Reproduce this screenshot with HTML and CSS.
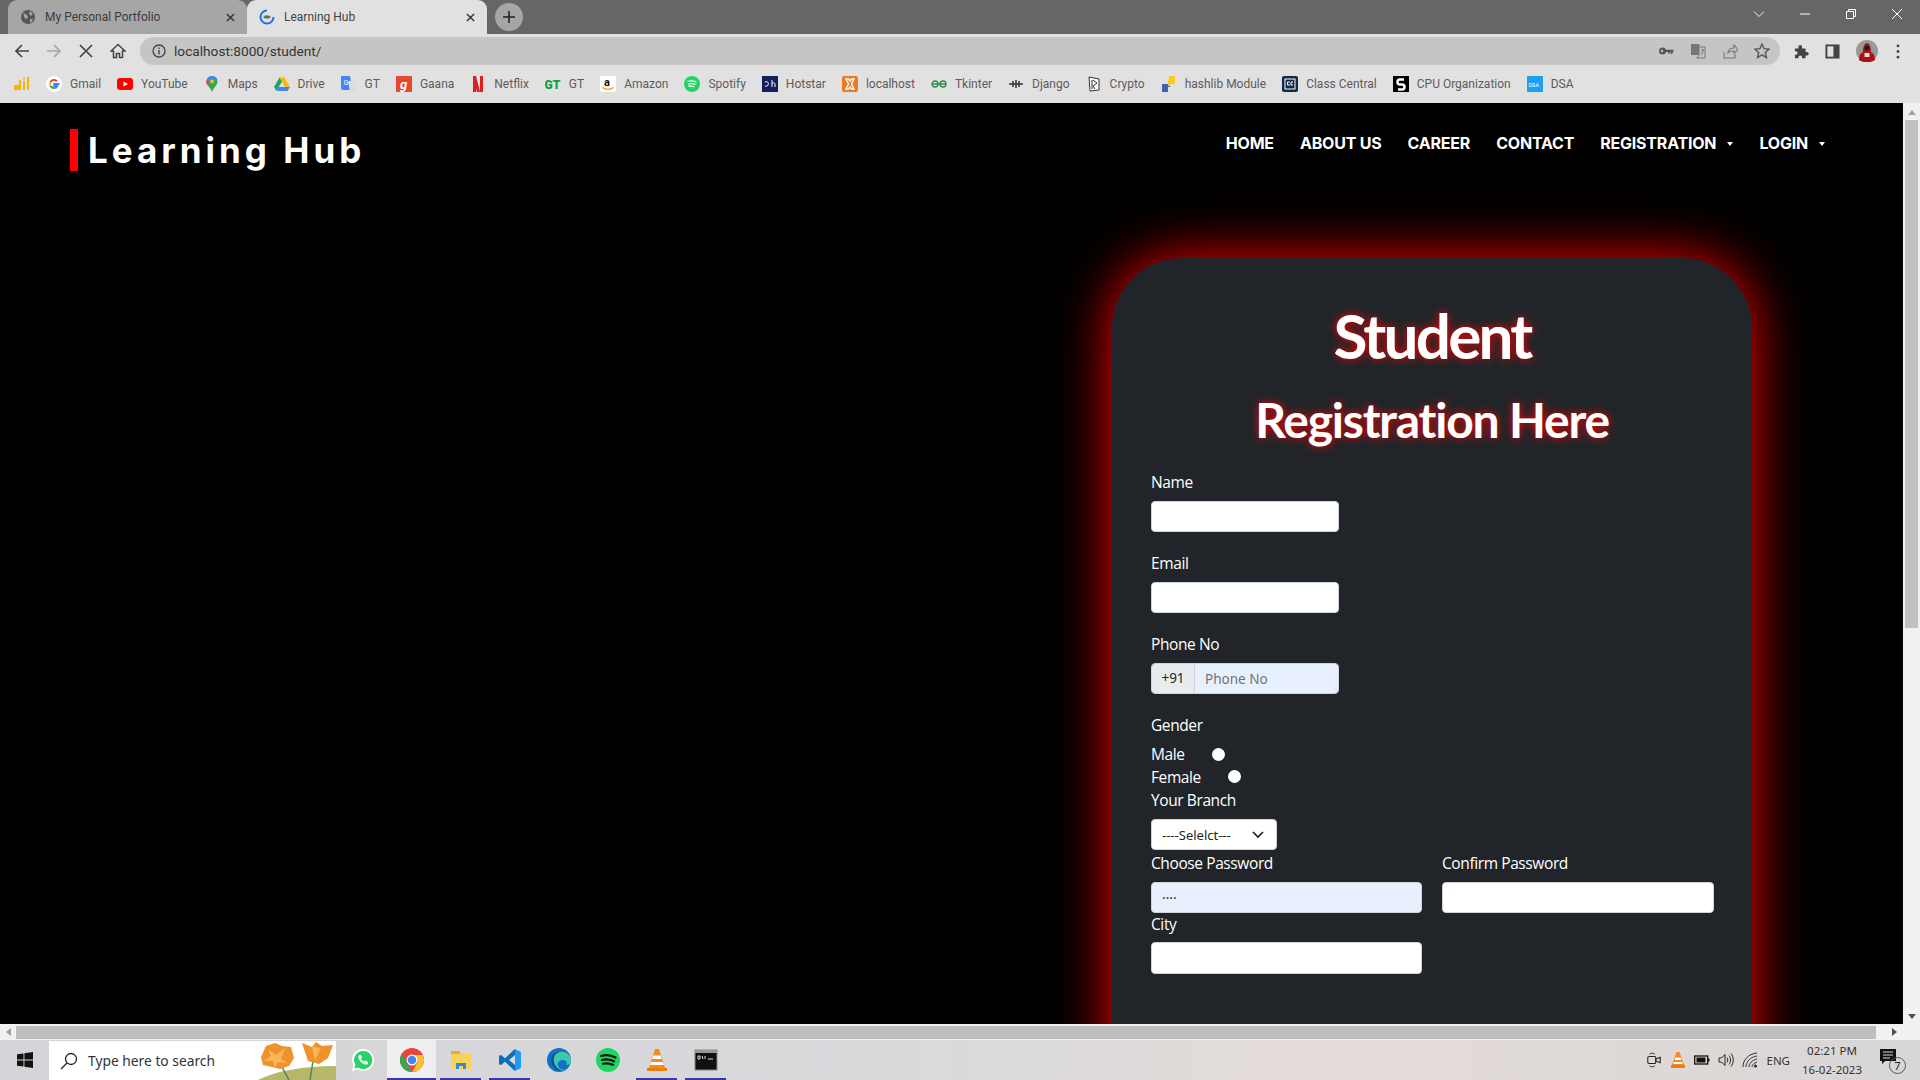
FILE: index.html
```html
<!DOCTYPE html>
<html lang="en">
<head>
    <meta charset="UTF-8">
    <meta name="viewport" content="width=device-width, initial-scale=1.0">
    <title>Learning Hub</title>
    <link rel="stylesheet" href="styles.css">
</head>
<body>
    <!-- browser tabs -->
    <div class="tabstrip">
        <div class="tab tab-off">
            <svg class="fav" viewBox="0 0 16 16"><circle cx="8" cy="8" r="7" fill="#555"/><path d="M3 4l4 2 1 3-3 1zM10 2l3 3-2 2-2-2zM10 10l3 0-2 4-1-1z" fill="#a6a6a6"/></svg>
            <span class="tab-title">My Personal Portfolio</span>
            <svg class="tab-x" viewBox="0 0 10 10"><path d="M1 1l8 8M9 1l-8 8" stroke="#333" stroke-width="1.6"/></svg>
        </div>
        <div class="tab tab-on">
            <svg class="fav" viewBox="0 0 16 16"><path d="M8 1.500a6.500 6.500 0 1 0 6.500 6.500" fill="none" stroke="#1a73e8" stroke-width="2"/><path d="M4.500 8h7M6 6.500v3M8 6v4M10 6.500v3" stroke="#444" stroke-width="1"/></svg>
            <span class="tab-title">Learning Hub</span>
            <svg class="tab-x" viewBox="0 0 10 10"><path d="M1 1l8 8M9 1l-8 8" stroke="#333" stroke-width="1.6"/></svg>
        </div>
        <div class="new-tab"><svg viewBox="0 0 12 12"><path d="M6 0v12M0 6h12" stroke="#222" stroke-width="1.6"/></svg></div>
        <div class="win-btns">
            <svg viewBox="0 0 12 12"><path d="M1 3.500l5 5 5-5" fill="none" stroke="#eee"/></svg>
            <svg viewBox="0 0 12 12"><path d="M1 6h10" stroke="#fff"/></svg>
            <svg viewBox="0 0 12 12"><path d="M1.500 3.500h7v7h-7zM3.500 3.500v-2h7v7h-2" fill="none" stroke="#fff"/></svg>
            <svg viewBox="0 0 12 12"><path d="M1 1l10 10M11 1l-10 10" stroke="#fff"/></svg>
        </div>
    </div>

    <!-- address bar -->
    <div class="toolbar">
        <div class="nav-icons">
            <svg viewBox="0 0 16 16"><path d="M15 8H2M8 2L2 8l6 6" fill="none" stroke="#444" stroke-width="1.7"/></svg>
            <svg viewBox="0 0 16 16"><path d="M1 8h13M8 2l6 6-6 6" fill="none" stroke="#a5a5a5" stroke-width="1.7"/></svg>
            <svg viewBox="0 0 16 16"><path d="M2 2l12 12M14 2L2 14" stroke="#444" stroke-width="1.7"/></svg>
            <svg viewBox="0 0 16 16"><path d="M8 1.500L1 8h2.500v6.500h3v-4h3v4h3V8H15z" fill="none" stroke="#444" stroke-width="1.5"/></svg>
        </div>
        <div class="urlbar">
            <svg class="info" viewBox="0 0 14 14"><circle cx="7" cy="7" r="6" fill="none" stroke="#444" stroke-width="1.3"/><path d="M7 6v4.500M7 3.400v1.500" stroke="#444" stroke-width="1.4"/></svg>
            <span class="url">localhost:8000/student/</span>
            <div class="url-actions">
                <svg viewBox="0 0 16 16"><circle cx="4.500" cy="8" r="3.500" fill="#555"/><circle cx="4" cy="8" r="1.200" fill="#c5c5c5"/><path d="M7 6.700h8.500v2.200h-1v2h-1.700v-2h-1v1.500H10V8.900H7z" fill="#555"/></svg>
                <svg viewBox="0 0 16 16"><rect x="1" y="1" width="8.500" height="11" fill="#777"/><path d="M9.500 4H15v11H6.500l3-3" fill="none" stroke="#777"/><path d="M11 7h3M12.500 6v1M11.500 12l2-5" stroke="#777" fill="none"/></svg>
                <svg viewBox="0 0 16 16"><path d="M2 9v6h11v-4M6 10c0-4 3-5 6-5V2l4 4.500-4 4V8c-3 0-4.500 0-6 2z" fill="none" stroke="#777" stroke-width="1.100"/></svg>
                <svg viewBox="0 0 16 16"><path d="M8 1l2.100 4.700 5 .5-3.800 3.300 1.100 5L8 11.900l-4.400 2.600 1.100-5L.9 6.200l5-.5z" fill="none" stroke="#555" stroke-width="1.400"/></svg>
            </div>
        </div>
        <div class="tool-icons">
            <svg viewBox="0 0 16 16"><path d="M1 5h4V3a2 2 0 0 1 4 0v2h4v4h1.500a2 2 0 0 1 0 4H13v3H9v-1a2 2 0 0 0-4 0v1H1v-4h1a2 2 0 0 0 0-4H1z" fill="#444" transform="scale(.95)"/></svg>
            <svg viewBox="0 0 16 16"><rect x="1.500" y="1.500" width="13" height="13" fill="none" stroke="#444" stroke-width="2"/><rect x="9" y="1.500" width="5.500" height="13" fill="#444"/></svg>
            <svg class="avatar" viewBox="0 0 22 22"><circle cx="11" cy="11" r="11" fill="#999"/><path d="M3 20c0-5 2-7 4-8 0-6 2-9 4-9s4 3 4 9c2 1 4 3 4 8-4 3-12 3-16 0z" fill="#a81414"/><circle cx="11" cy="8" r="2.500" fill="#2a1a1a"/><rect x="8.500" y="13" width="5" height="4" fill="#e8dada"/></svg>
            <svg class="dots" viewBox="0 0 4 16"><circle cx="2" cy="2" r="1.500" fill="#444"/><circle cx="2" cy="8" r="1.500" fill="#444"/><circle cx="2" cy="14" r="1.500" fill="#444"/></svg>
        </div>
    </div>

    <!-- bookmarks -->
    <div class="bookmarks">
        <div class="bm bm-apps"><svg viewBox="0 0 16 16"><path d="M1 9h4V4h2v10H3a2.500 2.500 0 0 1-2-5zM9 5h2v9H9zM9 1.500h2v2H9zM13 1h2v13h-2z" fill="#f5b800"/></svg></div>
        <div class="bm"><svg viewBox="0 0 16 16"><circle cx="8" cy="8" r="8" fill="#fff"/><path d="M13.500 8H8.200v2h3a3.300 3.300 0 0 1-3.200 2" fill="none" stroke="#4285f4" stroke-width="2"/><path d="M8 12a4 4 0 0 1-3.600-2.300" fill="none" stroke="#34a853" stroke-width="2"/><path d="M4.400 9.700a4 4 0 0 1 0-3.400" fill="none" stroke="#fbbc05" stroke-width="2"/><path d="M4.400 6.300A4 4 0 0 1 11 5.300" fill="none" stroke="#ea4335" stroke-width="2"/></svg><span>Gmail</span></div>
        <div class="bm"><svg viewBox="0 0 16 16"><rect y="2" width="16" height="12" rx="3" fill="#f00"/><path d="M6.500 5.500v5L11 8z" fill="#fff"/></svg><span>YouTube</span></div>
        <div class="bm"><svg viewBox="0 0 16 16"><path d="M8 0a5.500 5.500 0 0 1 5.500 5.500C13.500 9 10 11 8 16 6 11 2.500 9 2.500 5.500A5.500 5.500 0 0 1 8 0z" fill="#34a853"/><path d="M3 3.500A5.500 5.500 0 0 1 8 0a5.500 5.500 0 0 1 5 3L3.500 8z" fill="#4285f4"/><path d="M3 3.500l2.500 3-2.500 2.500C2 7 2 5 3 3.500z" fill="#ea4335"/><circle cx="8" cy="5.500" r="2" fill="#fbbc05"/></svg><span>Maps</span></div>
        <div class="bm"><svg viewBox="0 0 16 16"><path d="M5.500 1.500h5L16 11h-5z" fill="#fbbc05"/><path d="M5.500 1.500L0 11l2.500 4 5.500-9.500z" fill="#1fa463"/><path d="M2.500 15h11l2.500-4H5z" fill="#4285f4"/></svg><span>Drive</span></div>
        <div class="bm"><svg viewBox="0 0 16 16"><path d="M0 0h9l2 14H2a2 2 0 0 1-2-2z" fill="#4285f4"/><path d="M7 5h8v11H9z" fill="#ddd"/><text x="2.500" y="9" font-size="7" fill="#fff" font-family="Roboto">G</text></svg><span>GT</span></div>
        <div class="bm"><svg viewBox="0 0 16 16"><rect width="16" height="16" rx="1" fill="#e8472b"/><text x="4" y="13" font-size="13" font-weight="700" font-style="italic" fill="#fff" font-family="Roboto">g</text></svg><span>Gaana</span></div>
        <div class="bm"><svg viewBox="0 0 16 16"><path d="M3 0h3l4 16H7zM3 0h3v16l-3 0zM10 0h3v16h-3z" fill="#d81f26"/></svg><span>Netflix</span></div>
        <div class="bm"><svg viewBox="0 0 16 16"><text x="-.5" y="13" font-size="12" font-weight="900" fill="#13a03c" font-family="Roboto">GT</text></svg><span>GT</span></div>
        <div class="bm"><svg viewBox="0 0 16 16"><rect width="16" height="16" rx="2" fill="#fff"/><text x="4" y="10" font-size="11" font-weight="700" fill="#111" font-family="Roboto">a</text><path d="M2.500 11.500c3 2.500 8 2.500 11 0" fill="none" stroke="#f90" stroke-width="1.300"/></svg><span>Amazon</span></div>
        <div class="bm"><svg viewBox="0 0 16 16"><circle cx="8" cy="8" r="8" fill="#1ed760"/><path d="M3.500 5.500c3-1 6-.8 9 .8M4 8c3-.8 5-.6 7.500.7M4.500 10.400c2-.5 4-.4 6 .6" fill="none" stroke="#fff" stroke-width="1.300"/></svg><span>Spotify</span></div>
        <div class="bm"><svg viewBox="0 0 16 16"><rect width="16" height="16" fill="#13205c"/><path d="M3 6c3-1 4 1 3 3s-2 1-3 1M10 4v7M10 8c1-2 3-1 3 0v3" fill="none" stroke="#fff" stroke-width="1"/></svg><span>Hotstar</span></div>
        <div class="bm"><svg viewBox="0 0 16 16"><rect width="16" height="16" rx="2" fill="#ee7a22"/><path d="M4 3h2.500l1.500 2 1.500-2H12L9.500 8l2.500 5H9.500L8 11l-1.500 2H4l2.500-5z" fill="none" stroke="#fff" stroke-width="1.400"/></svg><span>localhost</span></div>
        <div class="bm"><svg viewBox="0 0 16 16"><path d="M1 8h14M1 8a3 3 0 0 0 6 0 3 3 0 0 0-6 0zM9 8a3 3 0 0 0 6 0 3 3 0 0 0-6 0z" fill="none" stroke="#2f8d46" stroke-width="1.300"/></svg><span>Tkinter</span></div>
        <div class="bm"><svg viewBox="0 0 16 16"><path d="M1 8h14M5 5v6M8 4v8M11 5v6" stroke="#333" stroke-width="1.500"/></svg><span>Django</span></div>
        <div class="bm"><svg viewBox="0 0 16 16"><path d="M3 1l10 2v11l-9 1z" fill="#fff" stroke="#333"/><path d="M7 4l4 3-4 3 2 3M6 4v9" fill="none" stroke="#333"/></svg><span>Crypto</span></div>
        <div class="bm"><svg viewBox="0 0 16 16"><path d="M8 0h5v7H7v2H1v7h6v-5h2V8h4V0z" fill="#3f63ae"/><path d="M8 0h6v8H9v2H7V3h1z" fill="#ffc91a"/><path d="M1 8h6v8H1z" fill="#3f63ae"/></svg><span>hashlib Module</span></div>
        <div class="bm"><svg viewBox="0 0 16 16"><rect width="16" height="16" rx="2" fill="#12294a"/><rect x="3" y="3" width="10" height="10" fill="none" stroke="#fff"/><path d="M8 6H5.500v3H8M11 6H9v3h2" fill="none" stroke="#fff"/></svg><span>Class Central</span></div>
        <div class="bm"><svg viewBox="0 0 16 16"><rect width="16" height="16" fill="#000"/><path d="M11 3.500H7a2.500 2.500 0 0 0 0 5h2a2.500 2.500 0 0 1 0 5H5" fill="none" stroke="#fff" stroke-width="2.500"/></svg><span>CPU Organization</span></div>
        <div class="bm"><svg viewBox="0 0 16 16"><rect width="16" height="16" rx="1" fill="#1fa0ee"/><text x="1.500" y="10.500" font-size="5.500" fill="#fff" font-family="Roboto">DSA</text></svg><span>DSA</span></div>
    </div>

    <div class="viewport">
        <div class="page">
            <nav class="topnav">
                <a href="#" class="logo">Learning Hub</a>
                <ul class="menu">
                    <li><a href="#">HOME</a></li>
                    <li><a href="#">ABOUT US</a></li>
                    <li><a href="#">CAREER</a></li>
                    <li><a href="#">CONTACT</a></li>
                    <li><a href="#" class="caret">REGISTRATION</a></li>
                    <li><a href="#" class="caret">LOGIN</a></li>
                </ul>
            </nav>
            <main class="content">
                <form class="card">
                    <h1>Student</h1>
                    <h2>Registration Here</h2>

                    <div class="field">
                        <label>Name</label>
                        <input type="text" class="input input-short">
                    </div>
                    <div class="field">
                        <label>Email</label>
                        <input type="text" class="input input-short">
                    </div>
                    <div class="field">
                        <label>Phone No</label>
                        <div class="phone">
                            <span class="prefix">+91</span>
                            <input type="text" class="phone-input" placeholder="Phone No">
                        </div>
                    </div>

                    <div class="gender-title">Gender</div>
                    <div class="radio-row"><span class="radio-label">Male</span><span class="radio"></span></div>
                    <div class="radio-row"><span class="radio-label radio-female">Female</span><span class="radio radio-up"></span></div>

                    <div class="tight">
                        <label>Your Branch</label>
                        <div class="select">----Selelct---<svg viewBox="0 0 12 8"><path d="M1 1l5 5 5-5" fill="none" stroke="#222" stroke-width="1.700"/></svg></div>
                    </div>

                    <div class="pair">
                        <div class="tight">
                            <label>Choose Password</label>
                            <input type="text" class="input input-filled" value="····">
                        </div>
                        <div class="tight">
                            <label>Confirm Password</label>
                            <input type="text" class="input">
                        </div>
                        <div class="tight">
                            <label class="label-city">City</label>
                            <input type="text" class="input input-tall">
                        </div>
                    </div>
                </form>
            </main>
        </div>
        <div class="vscroll">
            <div class="arrow-up"></div>
            <div class="vthumb"></div>
            <div class="arrow-down"></div>
        </div>
    </div>

    <div class="hscroll">
        <div class="arrow-left"></div>
        <div class="hthumb"></div>
        <div class="arrow-right"></div>
        <div class="corner"></div>
    </div>

    <!-- windows taskbar -->
    <div class="taskbar">
        <div class="start"><svg viewBox="0 0 16 16"><path d="M0 2.300L6.500 1.400V7.500H0zM7.400 1.300L16 0V7.500H7.400zM0 8.500H6.500V14.600L0 13.700zM7.400 8.500H16V16L7.400 14.700z" fill="#111"/></svg></div>
        <div class="searchbox">
            <svg viewBox="0 0 18 18"><circle cx="11" cy="7" r="5.500" fill="none" stroke="#222" stroke-width="1.300"/><path d="M7 11l-6 6" stroke="#222" stroke-width="1.300"/></svg>
            <span>Type here to search</span>
            <svg class="flower" viewBox="0 0 78 39"><path d="M0 39c18-9 44-14 78-14v14z" fill="#b7b76a"/><path d="M24 26l7 13M55 20l-3 19" stroke="#4c8a5a" stroke-width="1.500" fill="none"/><path d="M3 16l5-11 9-3 7 3 9 1 3 11-5 8-9 3-8-2-9-2z" fill="#f0922a"/><path d="M10 8l8 6 9-7-4 11 7 4-10-1-3 6-2-7-9 0 7-5z" fill="#f9b659"/><path d="M44 2l10 4 4-5 6 4 11-1-5 13-9 6-11-3z" fill="#f0922a"/><path d="M54 6l3 13 6-12z" fill="#f9b659"/></svg>
        </div>
        <div class="apps">
            <div class="app"><svg viewBox="0 0 24 24"><path d="M12 1a11 11 0 0 0-9.400 16.600L1 23l5.600-1.500A11 11 0 1 0 12 1z" fill="#fff"/><path d="M12 3a9 9 0 0 0-7.600 13.700l-1 3.700 3.800-1A9 9 0 1 0 12 3z" fill="#25d366"/><path d="M8 7c-1.500 2 0 5 2 7s5 3.500 7 2l-.5-2.500-2.500-1-1 1c-1.500-.5-2.500-1.500-3-3l1-1-1-2.500z" fill="#fff"/></svg></div>
            <div class="app app-on bar"><svg viewBox="0 0 24 24"><circle cx="12" cy="12" r="12" fill="#e8453c"/><path d="M12 24A12 12 0 0 1 1.600 6l6 10.500z" fill="#34a853"/><path d="M12 24l6-10.500L12 7h10.900A12 12 0 0 1 12 24z" fill="#fbc02d"/><circle cx="12" cy="12" r="5.500" fill="#fff"/><circle cx="12" cy="12" r="4.300" fill="#4285f4"/></svg></div>
            <div class="app bar"><svg viewBox="0 0 24 24"><path d="M2 3h8l2 3H2z" fill="#e8a92e"/><rect x="2" y="6" width="20" height="15" fill="#fad25a"/><path d="M7 21v-6h10v6h-3v-3h-4v3z" fill="#2a8fd8"/></svg></div>
            <div class="app bar"><svg viewBox="0 0 24 24"><path d="M17 1l6 3v16l-6 3L7 13.500 3 17l-2-1v-8l2-1 4 3.500z" fill="#1f9cf0"/><path d="M17 7l-6 5 6 5z" fill="#fff"/><path d="M17 1L7 10.500 3 7 1 8v8l2 1 4-3.500L17 23z" fill="#0b6eb8"/><path d="M17 7v10l-6-5z" fill="#d8d8da"/></svg></div>
            <div class="app"><svg viewBox="0 0 24 24"><circle cx="12" cy="12" r="12" fill="#1273c4"/><path d="M24 13c0-6-5-10-11-9C6 5 3 11 5 17c2 5 8 7 13 5-5 0-8-3-7-7 1-3 5-4 8-2 1 1 1 3 0 4 3 0 5-1 5-4z" fill="#3bc9a8"/><path d="M5 17C2 11 6 3 13 4 8 5 6 9 7 14c.5 3 3 7 8 8.500-4 1-8-1-10-5.500z" fill="#0c4f9c"/></svg></div>
            <div class="app"><svg viewBox="0 0 24 24"><circle cx="12" cy="12" r="12" fill="#1ed760"/><path d="M5 8c5-1.500 10-1 14.500 1.500M6 12c4-1 8-.7 12 1.300M7 15.800c3-.8 7-.5 10 1" fill="none" stroke="#111" stroke-width="2.200" stroke-linecap="round"/></svg></div>
            <div class="app bar"><svg viewBox="0 0 24 24"><path d="M10 1h4l6 19H4z" fill="#f58a1f"/><path d="M8.400 7.500h7.200l1 3.500H7.300zM6.200 14h11.600l1 3H5.200z" fill="#fff"/><rect x="2" y="20" width="20" height="3" fill="#ef7d0e"/></svg></div>
            <div class="app bar"><svg viewBox="0 0 24 24"><rect x="1" y="2" width="22" height="20" fill="#111" stroke="#888"/><rect x="1" y="2" width="22" height="3" fill="#999"/><path d="M4 8h2v3H4zM8 8l1 3M11 8v3M14 11h5" stroke="#ddd" fill="none"/></svg></div>
        </div>
        <div class="tray">
            <svg viewBox="0 0 16 18"><rect x="1" y="5" width="9" height="8" rx="1.500" fill="none" stroke="#222" stroke-width="1.200"/><path d="M10 8l5-2v6l-5-2z" fill="none" stroke="#222" stroke-width="1.200"/><path d="M3 2.500c2-1.500 4-1.500 6 0M3 15.500c2 1.500 4 1.500 6 0" fill="none" stroke="#222"/></svg>
            <svg viewBox="0 0 16 16"><path d="M6.500 0h3L14 13H2z" fill="#f58a1f"/><path d="M5.500 5.500h5l.7 2.500H4.800zM4 10h8l.7 2H3.300z" fill="#fff"/><rect x="1" y="13" width="14" height="3" fill="#ef7d0e"/></svg>
            <svg viewBox="0 0 16 16"><rect x=".7" y="4" width="13" height="8" fill="none" stroke="#111" stroke-width="1.300"/><rect x="2.500" y="5.500" width="9" height="5" fill="#111"/><rect x="14" y="6.500" width="1.500" height="3" fill="#111"/></svg>
            <svg viewBox="0 0 16 16"><path d="M1 6h2.500L7 2.500v11L3.500 10H1zM9 5.500c1 1.500 1 3.500 0 5M11 3.500c2 2.500 2 6.500 0 9M13 1.500c3 3.500 3 9.500 0 13" fill="none" stroke="#222"/></svg>
            <svg viewBox="0 0 16 16"><path d="M1 15c0-7 5-13 14-14M4 15c0-5 4-10 11-11M7 15c0-3 3-7 8-8M10 15c0-2 2-4 5-5" fill="none" stroke="#333"/><circle cx="13.500" cy="14" r="1.500" fill="#222"/></svg>
            <span class="lang">ENG</span>
            <div class="clock"><span>02:21 PM</span><span>16-02-2023</span></div>
            <div class="notify">
                <svg viewBox="0 0 16 16"><path d="M0 0h16v12H5l-3 3v-3H0z" fill="#111"/><path d="M3 3h10M3 6h10M3 9h7" stroke="#ddd"/></svg>
                <span class="badge">7</span>
            </div>
        </div>
    </div>
</body>
</html>
```

FILE: styles.css
```css
* {
    margin: 0;
    padding: 0;
    box-sizing: border-box;
}
html, body {
    height: 100%;
    overflow: hidden;
}
body {
    display: flex;
    flex-direction: column;
    font-family: "Noto Sans", sans-serif;
    background: #000;
}
svg {
    display: block;
    flex: none;
}

/* tabs */
.tabstrip {
    height: 34px;
    background: #666;
    display: flex;
    padding-left: 8px;
    flex: none;
}
.tab {
    width: 240px;
    height: 34px;
    display: flex;
    align-items: center;
    padding: 0 12px;
    border-radius: 9px 9px 0 0;
    font: 12px "Roboto", sans-serif;
    color: #444;
}
.tab-off {
    width: 239px;
    background: #a6a6a6;
    color: #3c3c3c;
}
.tab-on {
    background: #e1e1e1;
    color: #444;
}
.fav {
    width: 16px;
    height: 16px;
    margin-right: 9px;
}
.tab-title {
    flex: 1;
}
.tab-x {
    width: 9px;
    height: 9px;
}
.new-tab {
    width: 28px;
    height: 28px;
    margin: 3px 0 0 8px;
    border-radius: 50%;
    background: #a6a6a6;
    display: flex;
    align-items: center;
    justify-content: center;
}
.new-tab svg {
    width: 12px;
    height: 12px;
}
.win-btns {
    margin-left: auto;
    display: flex;
    align-items: center;
    height: 28px;
    padding-right: 17px;
    gap: 34px;
}
.win-btns svg {
    width: 12px;
    height: 12px;
}

/* address bar */
.toolbar {
    height: 34px;
    background: #e1e1e1;
    display: flex;
    align-items: center;
    flex: none;
}
.nav-icons {
    width: 140px;
    display: flex;
    padding-left: 14px;
    gap: 16px;
}
.nav-icons svg {
    width: 16px;
    height: 16px;
}
.urlbar {
    width: 1640px;
    height: 28px;
    background: #c5c5c5;
    border-radius: 14px;
    display: flex;
    align-items: center;
    padding: 0 10px 0 12px;
}
.info {
    width: 14px;
    height: 14px;
    margin-right: 8px;
}
.url {
    font: 13.700px "Roboto", sans-serif;
    color: #333;
}
.url-actions {
    margin-left: auto;
    display: flex;
    gap: 16px;
}
.url-actions svg {
    width: 16px;
    height: 16px;
}
.tool-icons {
    flex: 1;
    display: flex;
    align-items: center;
    padding-left: 14px;
    gap: 16px;
}
.tool-icons svg {
    width: 15px;
    height: 15px;
}
.tool-icons .avatar {
    width: 22px;
    height: 22px;
}
.tool-icons .dots {
    width: 4px;
    height: 15px;
    margin-left: 2px;
}

/* bookmarks */
.bookmarks {
    height: 35px;
    background: #e1e1e1;
    display: flex;
    align-items: center;
    padding: 0 0 3px 14px;
    gap: 16px;
    flex: none;
    font: 12px "Roboto", sans-serif;
    color: #5c5c5c;
}
.bm {
    display: flex;
    align-items: center;
    gap: 8px;
}
.bm svg {
    width: 16px;
    height: 16px;
}

/* page */
.viewport {
    flex: 1;
    min-height: 0;
    display: flex;
}
.page {
    flex: 1;
    min-width: 0;
    background: #000;
    overflow: hidden;
}
.topnav {
    display: flex;
    justify-content: space-between;
    align-items: flex-start;
    padding: 26px 78px 0 70px;
    height: 155px;
}
.logo {
    display: block;
    border-left: 8px solid #f00;
    padding-left: 10px;
    font: 700 35px/42px "Inter", sans-serif;
    letter-spacing: 4px;
    color: #fff;
    text-decoration: none;
}
.menu {
    list-style: none;
    display: flex;
    gap: 26px;
    padding-top: 2px;
}
.menu a {
    font: 700 16px/24px "Inter", sans-serif;
    letter-spacing: -.2px;
    color: #fff;
    text-decoration: none;
}
.caret::after {
    content: "";
    display: inline-block;
    margin-left: 11px;
    vertical-align: 3px;
    border-top: 4px solid #fff;
    border-left: 3.500px solid transparent;
    border-right: 3.500px solid transparent;
}
.content {
    display: flex;
    justify-content: flex-end;
    padding-right: 151px;
}
.card {
    width: 640px;
    height: 900px;
    background: #212529;
    border-radius: 70px 70px 0 0;
    box-shadow: 0 0 55px #f00;
    padding: 34px 39px 0;
    color: #fff;
}
.card h1, .card h2 {
    font-family: "Lato", sans-serif;
    font-weight: 700;
    text-align: center;
    text-shadow: 0 0 8px #f00;
}
.card h1 {
    font-size: 62px;
    line-height: 86px;
    letter-spacing: -2.800px;
}
.card h2 {
    font-size: 48px;
    line-height: 70px;
    letter-spacing: -1.200px;
    margin-top: 7px;
    margin-bottom: 15px;
}
.field {
    margin-bottom: 19px;
}
label, .gender-title {
    display: block;
    font: 15.500px/24px "Open Sans", sans-serif;
    letter-spacing: -.4px;
    color: #fff;
    margin-bottom: 7px;
}
.input {
    display: block;
    width: 100%;
    height: 31px;
    border: 1px solid #ced4da;
    border-radius: 4px;
    background: #fff;
    padding: 0 10px;
    font: 14px "Open Sans", sans-serif;
    color: #222;
    outline: none;
}
.input-short {
    width: 188px;
}
.input-filled {
    background: #e8f0fe;
}
.input-tall {
    height: 32px;
}
.phone {
    display: flex;
    width: 188px;
    height: 31px;
    border: 1px solid #ced4da;
    border-radius: 4px;
    overflow: hidden;
}
.prefix {
    width: 43px;
    background: #e9ecef;
    border-right: 1px solid #ced4da;
    font-size: 13.500px;
    line-height: 29px;
    text-align: center;
    color: #212529;
}
.phone-input {
    flex: 1;
    min-width: 0;
    border: 0;
    background: #e8f0fe;
    padding: 0 10px;
    font: 13.500px "Noto Sans", sans-serif;
    outline: none;
}
.phone-input::placeholder {
    color: #6c757d;
}
.gender-title {
    margin-bottom: 5px;
}
.radio-row {
    display: flex;
    height: 23px;
    font: 15.500px/24px "Open Sans", sans-serif;
    letter-spacing: -.4px;
    color: #fff;
}
.radio-label {
    width: 61px;
}
.radio-female {
    width: 77px;
}
.radio {
    width: 13px;
    height: 13px;
    margin-top: 6px;
    border-radius: 50%;
    background: #fff;
}
.radio-up {
    margin-top: 5px;
}
.select {
    width: 126px;
    height: 31px;
    background: #fff;
    border: 1px solid #ced4da;
    border-radius: 4px;
    display: flex;
    align-items: center;
    justify-content: space-between;
    padding: 0 12px 0 10px;
    font-size: 13px;
    color: #212529;
}
.select svg {
    width: 12px;
    height: 8px;
}
.pair {
    display: grid;
    grid-template-columns: 271px 272px;
    column-gap: 20px;
    margin-top: 1px;
}
.label-city {
    line-height: 23px;
    margin-bottom: 6px;
}

/* scrollbars */
.vscroll {
    width: 17px;
    flex: none;
    background: #f1f1f1;
    display: flex;
    flex-direction: column;
    align-items: center;
}
.arrow-up {
    margin: 7px 0 5px;
    border-bottom: 5px solid #a3a3a3;
    border-left: 4px solid transparent;
    border-right: 4px solid transparent;
}
.vthumb {
    width: 13px;
    height: 508px;
    background: #c1c1c1;
}
.arrow-down {
    margin-top: auto;
    margin-bottom: 5px;
    border-top: 5px solid #505050;
    border-left: 4px solid transparent;
    border-right: 4px solid transparent;
}
.hscroll {
    height: 16px;
    flex: none;
    background: #f1f1f1;
    display: flex;
    align-items: center;
}
.arrow-left {
    margin: 0 5px 0 6px;
    border-right: 5px solid #a0a0a0;
    border-top: 4px solid transparent;
    border-bottom: 4px solid transparent;
}
.hthumb {
    width: 1860px;
    height: 13px;
    background: #bebebe;
}
.arrow-right {
    margin-left: 16px;
    border-left: 5px solid #505050;
    border-top: 4px solid transparent;
    border-bottom: 4px solid transparent;
}
.corner {
    flex: 1;
}

/* taskbar */
.taskbar {
    height: 40px;
    flex: none;
    display: flex;
    align-items: stretch;
    background: linear-gradient(90deg, #d4d4d8, #d9d9dc 45%, #e4dcd8 70%, #d8d6d6);
}
.start {
    width: 49px;
    display: flex;
    align-items: center;
    justify-content: center;
}
.start svg {
    width: 16px;
    height: 16px;
}
.searchbox {
    width: 287px;
    margin-top: 1px;
    background: #fff;
    display: flex;
    align-items: center;
    padding-left: 11px;
    position: relative;
    font: 13.800px "Noto Sans", sans-serif;
    color: #333;
}
.searchbox > svg:first-child {
    width: 18px;
    height: 18px;
    margin-right: 10px;
}
.flower {
    position: absolute;
    right: 0;
    top: 0;
    width: 78px;
    height: 39px;
}
.apps {
    display: flex;
    margin-left: 2px;
}
.app {
    width: 49px;
    display: flex;
    align-items: center;
    justify-content: center;
    position: relative;
}
.app svg {
    width: 24px;
    height: 24px;
}
.app-on {
    background: #efefef;
}
.bar::after {
    content: "";
    position: absolute;
    left: 4px;
    right: 4px;
    bottom: 0;
    height: 2px;
    background: #3b32b4;
}
.app-on::after {
    left: 0;
    right: 0;
}
.tray {
    margin-left: auto;
    display: flex;
    align-items: center;
    gap: 8px;
    padding-right: 14px;
    font: 11.500px "Noto Sans", sans-serif;
    color: #333;
}
.tray > svg {
    width: 16px;
    height: 16px;
}
.clock {
    width: 60px;
    margin-left: 4px;
    display: flex;
    flex-direction: column;
    align-items: center;
    line-height: 19px;
    white-space: nowrap;
}
.notify {
    margin-left: 10px;
    width: 26px;
    height: 28px;
    position: relative;
}
.notify svg {
    width: 16px;
    height: 16px;
    position: absolute;
    left: 0;
    top: 3px;
}
.badge {
    position: absolute;
    right: 0;
    bottom: 0;
    width: 17px;
    height: 17px;
    border: 1px solid #555;
    border-radius: 50%;
    font-size: 11px;
    line-height: 15px;
    text-align: center;
    color: #222;
}
```
